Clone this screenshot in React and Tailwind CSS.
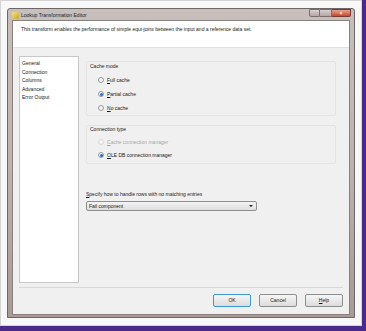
import React from "react";

function Radio({ checked, disabled, label, u }) {
  return (
    <div className="flex items-center h-[8px]">
      <div
        className={
          "w-[6px] h-[6px] rounded-full border flex items-center justify-center " +
          (disabled ? "border-[#d8d8d8] bg-[#f4f4f4]" : "border-[#9a9a9a] bg-[#f4f4f4]")
        }
      >
        {checked && <div className="w-[3px] h-[3px] rounded-full bg-[#2a6fc0]" />}
      </div>
      <span className={"ml-[3px] " + (disabled ? "text-[#a8a8a8]" : "text-[#1a1a1a]")}>
        <span className="underline decoration-[0.5px]">{u}</span>
        {label}
      </span>
    </div>
  );
}

function Btn({ children, def }) {
  return (
    <div
      className={
        "w-[38px] h-[13px] rounded-[2px] border flex items-center justify-center bg-gradient-to-b from-[#f6f6f6] to-[#dcdcdc] " +
        (def ? "border-[#3c9bd6]" : "border-[#8e8f8f]")
      }
    >
      {children}
    </div>
  );
}

export default function App() {
  return (
    <div
      className="w-[366px] h-[331px] bg-[#4a2a88] overflow-hidden"
      style={{ fontFamily: '"Liberation Sans", Arial, sans-serif' }}
    >
      <div className="w-[362px] h-[326px] bg-[#f8f8f8] border border-[#d4d4d4] pl-[6px] pt-[7px]">
        {/* Window */}
        <div className="w-[348px] h-[310px] flex flex-col bg-gradient-to-b from-[#c7bfbb] via-[#bdb3ae] to-[#a89a94] rounded-t-[3px] border border-[#6d6868]">
          {/* Title bar */}
          <div className="h-[13px] flex items-start relative">
            <div className="ml-[4px] mt-[3px] w-[7px] h-[7px] bg-gradient-to-br from-[#f7e27a] to-[#c9a23a] rounded-[1px]" />
            <span className="ml-[2px] mt-[3px] text-[5px] leading-[7px] text-[#1e1e1e]">
              Lookup Transformation Editor
            </span>
            <div className="ml-auto flex mr-[3px]">
              <div className="w-[11px] h-[8px] bg-gradient-to-b from-[#d8d0cf] to-[#b3a8a6] border border-[#7a6e6e] rounded-bl-[2px]" />
              <div className="w-[12px] h-[8px] bg-gradient-to-b from-[#d8d0cf] to-[#b3a8a6] border-y border-r border-[#7a6e6e]" />
              <div className="w-[19px] h-[8px] bg-gradient-to-b from-[#e8a08e] to-[#c8442c] border-y border-r border-[#7a3a30] rounded-br-[2px] flex items-center justify-center text-white text-[5px] font-bold leading-none">
                ×
              </div>
            </div>
          </div>
          {/* Client */}
          <div className="flex-1 mx-[4px] mb-[2px] flex flex-col bg-[#f0f0f0] border border-[#8a8080] text-[5px] leading-[7px] text-[#1a1a1a]">
            <div className="h-[27px] bg-white pl-[8px] pt-[5px] border-b border-[#e0e0e0]">
              This transform enables the performance of simple equi-joins between the input and a reference data set.
            </div>
            <div className="flex flex-1 pt-[8px]">
              {/* list */}
              <div className="ml-[6px] w-[60px] h-[227px] bg-white border border-[#c8c8c8] pl-[2px] pt-[2px] flex flex-col">
                <span className="h-[8.5px] leading-[8px]">General</span>
                <span className="h-[8.5px] leading-[8px]">Connection</span>
                <span className="h-[8.5px] leading-[8px]">Columns</span>
                <span className="h-[8.5px] leading-[8px]">Advanced</span>
                <span className="h-[8.5px] leading-[8px]">Error Output</span>
              </div>
              {/* right */}
              <div className="ml-[7px] w-[250px] flex flex-col">
                <div className="mt-[5px] h-[55px] border border-[#e4e4e4] rounded-[2px] flex flex-col pl-[3px]">
                  <span className="mt-[1px]">Cache mode</span>
                  <div className="ml-[8px] mt-[6px] flex flex-col gap-[6px]">
                    <Radio u="F" label="ull cache" />
                    <Radio u="P" label="artial cache" checked />
                    <Radio u="N" label="o cache" />
                  </div>
                </div>
                <div className="mt-[9px] h-[39px] border border-[#e4e4e4] rounded-[2px] flex flex-col pl-[3px]">
                  <span className="mt-[0px]">Connection type</span>
                  <div className="ml-[8px] mt-[5px] flex flex-col gap-[5px]">
                    <Radio u="C" label="ache connection manager" disabled />
                    <Radio u="O" label="LE DB connection manager" checked />
                  </div>
                </div>
                <span className="mt-[27px]">
                  <span className="underline decoration-[0.5px]">S</span>pecify how to handle rows with no matching entries
                </span>
                <div className="mt-[3px] w-[171px] h-[10px] border border-[#8e8f8f] rounded-[2px] bg-gradient-to-b from-[#f4f4f4] to-[#dedede] flex items-center pl-[2px] pr-[3px]">
                  <span>Fail component</span>
                  <span className="ml-auto w-0 h-0 border-l-[2px] border-r-[2px] border-t-[2px] border-l-transparent border-r-transparent border-t-[#222]" />
                </div>
              </div>
            </div>
            <div className="mx-[6px] h-px bg-[#d8d8d8] mt-[4px]" />
            <div className="h-[26px] flex items-start justify-end pt-[6px] pr-[6px] gap-[8px]">
              <Btn def>OK</Btn>
              <Btn>Cancel</Btn>
              <Btn>
                <span className="underline decoration-[0.5px]">H</span>elp
              </Btn>
            </div>
          </div>
        </div>
      </div>
    </div>
  );
}
